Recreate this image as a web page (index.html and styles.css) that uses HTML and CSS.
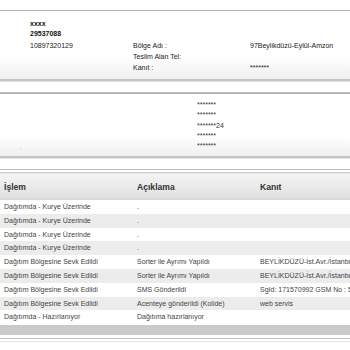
FILE: index.html
```html
<!DOCTYPE html>
<html>
<head>
<meta charset="utf-8">
<link rel="stylesheet" href="styles.css">
</head>
<body>
<div class="page">
  <div class="panel panel-one">
    <div class="info-grid">
      <div class="c1 r1 strong">xxxx</div>
      <div class="c1 r2 strong">29537088</div>
      <div class="c1 r3">10897320129</div>
      <div class="c2 r3">Bölge Adı :</div>
      <div class="c3 r3">97Beylikdüzü-Eylül-Amzon</div>
      <div class="c2 r4">Teslim Alan Tel:</div>
      <div class="c2 r5">Kanıt :</div>
      <div class="c3 r5">*******</div>
    </div>
  </div>
  <div class="divider"></div>
  <div class="panel panel-two">
    <div class="stars-grid">
      <div class="s2">*******</div>
      <div class="s2">*******</div>
      <div class="s2">*******24</div>
      <div class="s2">*******</div>
      <div class="s1 dot">,</div>
      <div class="s2">*******</div>
    </div>
  </div>
  <div class="divider"></div>
  <table class="moves">
    <colgroup><col class="w1"><col class="w2"><col class="w3"></colgroup>
    <thead>
      <tr><th>İşlem</th><th>Açıklama</th><th>Kanıt</th></tr>
    </thead>
    <tbody>
      <tr><td>Dağıtımda - Kurye Üzerinde</td><td>.</td><td></td></tr>
      <tr class="alt"><td>Dağıtımda - Kurye Üzerinde</td><td>.</td><td></td></tr>
      <tr><td>Dağıtımda - Kurye Üzerinde</td><td>.</td><td></td></tr>
      <tr class="alt"><td>Dağıtımda - Kurye Üzerinde</td><td>.</td><td></td></tr>
      <tr><td>Dağıtım Bölgesine Sevk Edildi</td><td>Sorter ile Ayrımı Yapıldı</td><td>BEYLİKDÜZÜ-İst.Avr./İstanbul</td></tr>
      <tr class="alt"><td>Dağıtım Bölgesine Sevk Edildi</td><td>Sorter ile Ayrımı Yapıldı</td><td>BEYLİKDÜZÜ-İst.Avr./İstanbul</td></tr>
      <tr><td>Dağıtım Bölgesine Sevk Edildi</td><td>SMS Gönderildi</td><td>SgId: 171570992 GSM No : 5*******</td></tr>
      <tr class="alt"><td>Dağıtım Bölgesine Sevk Edildi</td><td>Acenteye gönderildi (Kolide)</td><td>web servis</td></tr>
      <tr><td>Dağıtımda - Hazırlanıyor</td><td>Dağıtıma hazırlanıyor</td><td></td></tr>
    </tbody>
  </table>
  <div class="footer-bar"></div>
  <div class="footer-line"></div>
</div>
</body>
</html>
```
FILE: styles.css
```css
html, body {
  margin: 0;
  padding: 0;
  overflow: hidden;
  background: #fff;
}
body {
  font-family: "Liberation Sans", Arial, sans-serif;
  font-size: 7px;
  color: #333;
}
.page {
  width: 420px;
  padding-top: 10px;
}
.panel {
  border-top: 1px solid #b4b4b4;
  border-bottom: 2px solid #c4c4c4;
  background: linear-gradient(to bottom, #fff 0%, #fff 68%, #efefef 100%);
}
.panel-one {
  height: 68px;
}
.info-grid {
  display: grid;
  grid-template-columns: 30px 103px 117px 170px;
  grid-template-rows: repeat(5, 11px);
  padding-top: 7px;
  line-height: 11px;
  color: #222;
}
.strong { font-weight: bold; color: #111; }
.c1 { grid-column: 2; }
.c2 { grid-column: 3; }
.c3 { grid-column: 4; }
.r1 { grid-row: 1; }
.r2 { grid-row: 2; line-height: 9px; }
.r3 { grid-row: 3; }
.r4 { grid-row: 4; }
.r5 { grid-row: 5; }
.divider {
  height: 10px;
  border-top: 1px solid #e2e2e2;
  border-bottom: 1px solid #bcbcbc;
}
.panel-two {
  height: 62px;
}
.stars-grid {
  display: grid;
  grid-template-columns: 20px 177px 200px;
  grid-auto-rows: 10.25px;
  padding-top: 6px;
  line-height: 10.25px;
  color: #333;
}
.s1 { grid-column: 2; }
.s2 { grid-column: 3; }
.stars-grid .dot {
  grid-row: 5;
  color: #b08090;
  font-size: 6px;
  padding-top: 1px;
}
.stars-grid .s2:nth-child(6) { grid-row: 5; }
.moves {
  border-collapse: collapse;
  width: 420px;
  table-layout: fixed;
  margin-top: 2px;
  border-top: 1px solid #cfcfcf;
}
.w1 { width: 133px; }
.w2 { width: 124px; }
.w3 { width: 163px; }
.moves th {
  height: 24px;
  text-align: left;
  font-size: 8.6px;
  font-weight: bold;
  color: #333;
  padding: 2px 0 0 4px;
  background: linear-gradient(to bottom, #f4f4f4 0%, #e8e8e8 60%, #dedede 100%);
  border-bottom: 1px solid #d8d8d8;
}
.moves td {
  height: 13.8px;
  padding: 0 0 0 4px;
  line-height: 13.8px;
  white-space: nowrap;
  overflow: hidden;
  color: #444;
  font-size: 7px;
}
.moves td:nth-child(3), .moves th:nth-child(3) {
  padding-left: 3px;
}
.moves tr.alt td {
  background: #ececec;
}
.footer-bar {
  height: 10px;
  margin-top: 1px;
  background: #cacaca;
}
.footer-line {
  height: 2px;
  margin-top: 3px;
  border-top: 1px solid #bdbdbd;
  border-bottom: 1px solid #e4e4e4;
}
```
